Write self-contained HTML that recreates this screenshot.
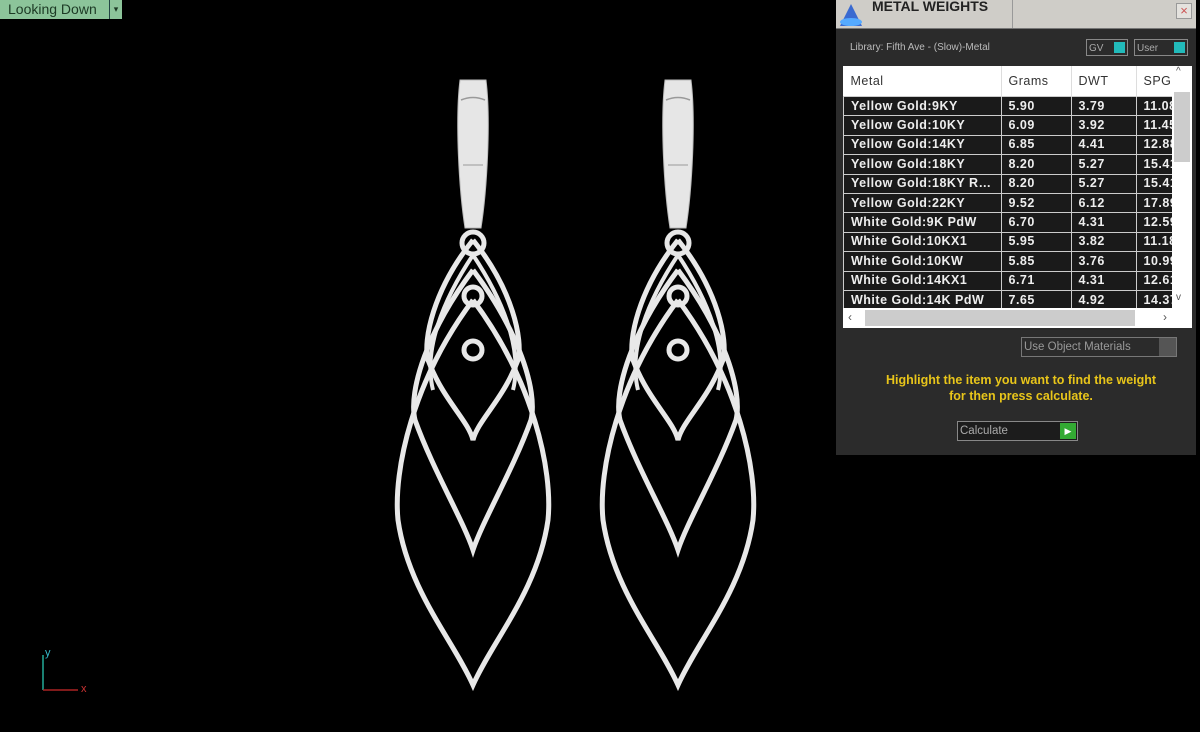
<!DOCTYPE html>
<html><head><style>
body{margin:0;width:1200px;height:732px;background:#000;overflow:hidden;position:relative;font-family:"Liberation Sans",sans-serif}
.tag{position:absolute;left:0;top:0;width:122px;height:19px;background:#8cc49a;color:#1d3a25;font-size:14px;line-height:19px;padding-left:8px;box-sizing:border-box}
.tag .dd{position:absolute;right:0;top:0;width:12px;height:19px;border-left:1px solid #244;font-size:9px;text-align:center}
.panel{position:absolute;left:836px;top:0;width:360px;height:455px;background:#2b2b2b}
.title{position:absolute;left:0;top:0;width:360px;height:28px;background:#cfcdc8;border-bottom:1px solid #777}
.title b{position:absolute;left:36px;top:-2px;font-size:14px;color:#222}
.title .sep{position:absolute;left:176px;top:0;width:1px;height:28px;background:#999}
.x{position:absolute;right:4px;top:3px;width:14px;height:14px;border:1px solid #999;color:#c55;font-size:13px;line-height:13px;text-align:center;background:#e4e2de}
.lib{position:absolute;left:14px;top:42px;font-size:10px;color:#bbb}
.tg{position:absolute;top:39px;height:17px;border:1px solid #888;font-size:10px;color:#aaa;line-height:17px;padding-left:2px;box-sizing:border-box}
.tg i{position:absolute;right:2px;top:2px;width:11px;height:11px;background:#2bb;}
table{position:absolute;left:7px;top:66px;border-collapse:collapse;font-size:12.5px;letter-spacing:.5px}
td{height:18.4px;border:1px solid #ccc;padding:0 0 0 7px;color:#eee;background:#1a1a1a;white-space:nowrap;overflow:hidden;font-weight:bold;line-height:17px}
th{height:28px;background:#fff;color:#333;font-weight:normal;text-align:left;padding-left:7px;border-right:1px solid #ddd}
.wb{position:absolute;left:7px;top:66px;width:349px;height:262px;background:#fff}
.vs{position:absolute;left:1172px;top:0}
</style></head><body>
<div class="tag">Looking Down<span class="dd">▾</span></div>
<svg width="1200" height="732" style="position:absolute;left:0;top:0">
<defs><g id="e" fill="none" stroke="#e8e8e8" stroke-width="5">
<path d="M0,240 C-40,290 -50,340 -45,360 C-30,400 -5,420 0,440 C5,420 30,400 45,360 C50,340 40,290 0,240"/>
<path d="M0,270 C-45,330 -65,390 -58,420 C-40,470 -10,520 0,550 C10,520 40,470 58,420 C65,390 45,330 0,270"/>
<path d="M0,300 C-60,380 -80,470 -75,520 C-65,590 -20,640 0,685 C20,640 65,590 75,520 C80,470 60,380 0,300"/>
<path d="M0,255 C30,300 50,350 40,390 M0,255 C-30,300 -50,350 -40,390" stroke-width="4"/>
<circle cx="0" cy="243" r="11" stroke-width="5"/><circle cx="0" cy="296" r="9"/><circle cx="0" cy="350" r="9"/>
<path d="M-13,80 C-18,120 -14,190 -8,228 L8,228 C14,190 18,120 13,80 Z" fill="#e6e6e6" stroke="#bbb" stroke-width="1"/>
<path d="M-12,100 Q0,95 12,100" stroke="#999" stroke-width="1.5"/>
<path d="M-10,165 L10,165" stroke="#999" stroke-width="1"/>
</g></defs>
<use href="#e" transform="translate(473,0)"/>
<use href="#e" transform="translate(678,0)"/>
<path d="M43,690 L43,655" stroke="#2a9" stroke-width="1.5"/><path d="M43,690 L78,690" stroke="#a22" stroke-width="1.5"/>
<text x="45" y="656" fill="#3bc" font-size="11" font-family="Liberation Sans">y</text>
<text x="81" y="692" fill="#c33" font-size="11" font-family="Liberation Sans">x</text>
</svg>
<div class="panel">
<div class="title"><svg width="30" height="28" style="position:absolute;left:0;top:0"><path d="M4,26 L15,4 L26,26Z" fill="#3a6ad0"/><ellipse cx="15" cy="22" rx="11" ry="4" fill="#5af"/></svg><b>METAL WEIGHTS</b><span class="sep"></span><span class="x">×</span></div>
<div class="lib">Library: Fifth Ave - (Slow)-Metal</div>
<div class="tg" style="left:250px;width:42px">GV<i></i></div>
<div class="tg" style="left:298px;width:54px">User<i></i></div>
<div class="wb"></div>
<table>
<tr><th style="width:149px">Metal</th><th style="width:61px">Grams</th><th style="width:56px">DWT</th><th style="width:35px">SPG</th></tr>
<tr><td>Yellow Gold:9KY</td><td>5.90</td><td>3.79</td><td>11.08</td></tr>
<tr><td>Yellow Gold:10KY</td><td>6.09</td><td>3.92</td><td>11.45</td></tr>
<tr><td>Yellow Gold:14KY</td><td>6.85</td><td>4.41</td><td>12.88</td></tr>
<tr><td>Yellow Gold:18KY</td><td>8.20</td><td>5.27</td><td>15.41</td></tr>
<tr><td>Yellow Gold:18KY R…</td><td>8.20</td><td>5.27</td><td>15.41</td></tr>
<tr><td>Yellow Gold:22KY</td><td>9.52</td><td>6.12</td><td>17.89</td></tr>
<tr><td>White Gold:9K PdW</td><td>6.70</td><td>4.31</td><td>12.59</td></tr>
<tr><td>White Gold:10KX1</td><td>5.95</td><td>3.82</td><td>11.18</td></tr>
<tr><td>White Gold:10KW</td><td>5.85</td><td>3.76</td><td>10.99</td></tr>
<tr><td>White Gold:14KX1</td><td>6.71</td><td>4.31</td><td>12.61</td></tr>
<tr><td>White Gold:14K PdW</td><td>7.65</td><td>4.92</td><td>14.37</td></tr>
</table>
<div style="position:absolute;left:336px;top:66px;width:20px;height:242px;background:#fff"><div style="position:absolute;left:2px;top:26px;width:16px;height:70px;background:#ccc"></div><div style="position:absolute;left:4px;top:0;font-size:10px;color:#555">^</div><div style="position:absolute;left:4px;top:226px;font-size:10px;color:#555">v</div></div>
<div style="position:absolute;left:7px;top:308px;width:349px;height:20px;background:#fff"><div style="position:absolute;left:22px;top:2px;width:270px;height:16px;background:#ccc"></div><span style="position:absolute;left:5px;top:2px;font-size:12px;color:#555">‹</span><span style="position:absolute;left:320px;top:2px;font-size:12px;color:#555">›</span></div>
<div style="position:absolute;left:185px;top:337px;width:156px;height:20px;border:1px solid #777;box-sizing:border-box;color:#999;font-size:11.5px;line-height:18px;padding-left:2px">Use Object Materials<span style="position:absolute;right:0;top:0;width:17px;height:18px;background:#555"></span></div>
<div style="position:absolute;left:0;top:372px;width:370px;text-align:center;color:#e8c51a;font-size:12.5px;font-weight:bold;line-height:16px">Highlight the item you want to find the weight<br>for then press calculate.</div>
<div style="position:absolute;left:121px;top:421px;width:121px;height:20px;border:1px solid #888;box-sizing:border-box;color:#aaa;font-size:11.5px;line-height:18px;padding-left:2px;background:#1c1c1c">Calculate<span style="position:absolute;right:1px;top:1px;width:16px;height:16px;background:#3a3;color:#fff;font-size:9px;text-align:center;line-height:16px">▶</span></div>
</div>
</body></html>
